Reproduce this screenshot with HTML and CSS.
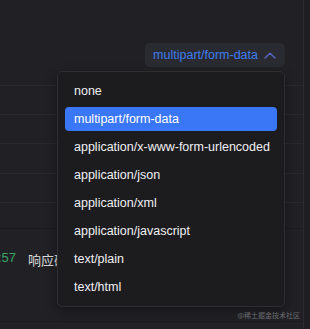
FILE: index.html
```html
<!DOCTYPE html>
<html lang="zh">
<head>
  <meta charset="UTF-8" />
  <title>Body type</title>
  <link rel="stylesheet" href="styles.css">
</head>
<body>
  <div class="app">
    <main class="panel">
      <div class="toolbar">
        <button class="type-btn">
          <span>multipart/form-data</span>
          <svg class="chevron" width="12" height="7" viewBox="0 0 12 7" fill="none">
            <path d="M1 6L6 1.2L11 6" stroke="currentColor" stroke-width="1.4" stroke-linecap="round" stroke-linejoin="round"/>
          </svg>
        </button>
      </div>
      <div class="rows">
        <div class="row"></div>
        <div class="row"></div>
        <div class="row tall"></div>
        <div class="row"></div>
        <div class="row short"></div>
        <div class="row log">
          <div class="time"><span>10:32:57</span></div>
          <span class="msg">响应码 200</span>
        </div>
      </div>

      <ul class="menu">
        <li>none</li>
        <li class="active">multipart/form-data</li>
        <li>application/x-www-form-urlencoded</li>
        <li>application/json</li>
        <li>application/xml</li>
        <li>application/javascript</li>
        <li>text/plain</li>
        <li>text/html</li>
      </ul>
    </main>
    <aside class="side"></aside>
  </div>
  <div class="mark">@稀土掘金技术社区</div>
</body>
</html>
```

FILE: styles.css
```css
body {
  margin: 0;
  background-color: #212125;
  font-family: "Liberation Sans", Arial, "Noto Sans CJK SC", sans-serif;
  font-size: 12.5px;
  color: #e8e8ea;
  height: 329px;
  overflow: hidden;
}
.app {
  display: flex;
  height: 100%;
}
.panel {
  position: relative;
  flex: 1;
  display: flex;
  flex-direction: column;
}
.side {
  width: 6px;
  border-left: 1px solid #2b2b30;
  background-color: #1f1f23;
}

.toolbar {
  height: 85px;
  display: flex;
  justify-content: flex-end;
  align-items: flex-start;
  padding-right: 18px;
  box-sizing: border-box;
  padding-top: 43px;
}
.type-btn {
  display: flex;
  align-items: center;
  gap: 6px;
  height: 24px;
  padding: 0 9px 0 8px;
  border: none;
  border-radius: 5px;
  background-color: #2a2b30;
  color: #3f7cf0;
  font-family: inherit;
  font-size: 12.5px;
}
.chevron {
  color: #5867c4;
}

.rows {
  display: flex;
  flex-direction: column;
}
.row {
  height: 28px;
  border-top: 1px solid #2a2a2f;
}
.row.tall { height: 29px; }
.row.short { height: 25px; }
.row.log {
  height: 94px;
  border-top-color: #1b1b1e;
  border-bottom: 1px solid #1b1b1e;
  display: flex;
  align-items: flex-start;
  padding-top: 21px;
  box-sizing: border-box;
  gap: 12px;
}
.time {
  width: 16px;
  display: flex;
  justify-content: flex-end;
  white-space: nowrap;
  color: #3aa366;
  font-size: 13px;
}
.msg {
  font-family: "Noto Sans CJK SC", sans-serif;
  font-size: 13px;
  color: #dcdcdf;
  white-space: nowrap;
}

/* dropdown overlay */
.menu {
  position: absolute;
  top: 71px;
  left: 57px;
  width: 228px;
  box-sizing: border-box;
  margin: 0;
  padding: 7px 7px;
  list-style: none;
  background-color: #1c1c1f;
  border: 1px solid #2d2d32;
  border-radius: 5px;
  box-shadow: 0 4px 12px rgba(0, 0, 0, 0.35);
  display: flex;
  flex-direction: column;
  gap: 4px;
}
.menu li {
  height: 24px;
  line-height: 24px;
  padding-left: 9px;
  border-radius: 4px;
  white-space: nowrap;
  color: #f0f0f2;
}
.menu li.active {
  background-color: #3a77f6;
  color: #fff;
}

.mark {
  position: absolute;
  right: 10px;
  bottom: 9px;
  font-family: "Noto Sans CJK SC", sans-serif;
  font-size: 7px;
  color: #6b6b70;
}
```
